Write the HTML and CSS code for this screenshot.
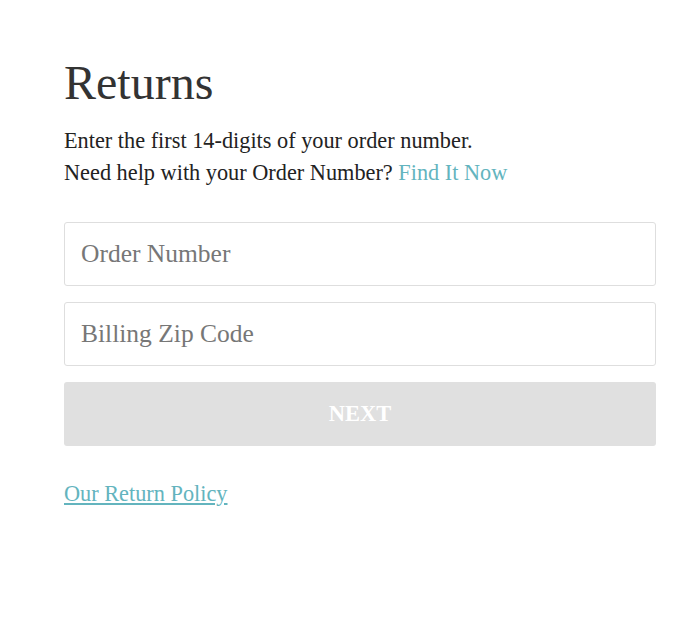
FILE: index.html
```html
<!DOCTYPE html>
<html lang="en">
<head>
    <meta charset="UTF-8">
    <meta name="viewport" content="width=device-width, initial-scale=1.0">
    <title>Returns</title>
    <link rel="stylesheet" href="styles.css">
</head>
<body>

<div class="returns">
    <h1>Returns</h1>
    <p class="intro">
        Enter the first 14-digits of your order number.<br>
        Need help with your Order Number? <a href="#" class="find-link">Find It Now</a>
    </p>

    <form class="returns-form">
        <input type="text" name="orderNumber" placeholder="Order Number">
        <input type="text" name="zipCode" placeholder="Billing Zip Code">
        <button type="submit" disabled>NEXT</button>
    </form>

    <a href="#" class="policy-link">Our Return Policy</a>
</div>

</body>
</html>
```

FILE: styles.css
```css
body {
    font-family: "Liberation Serif", "Times New Roman", serif;
    background-color: #fff;
    color: #222;
    margin: 0;
    padding: 0;
}
.returns {
    width: 592px;
    padding: 55px 64px 0;
}
h1 {
    font-size: 48px;
    font-weight: normal;
    line-height: 56px;
    color: #333;
    margin: 0 0 14px;
}
.intro {
    font-size: 22.3px;
    line-height: 32px;
    margin: 0 0 33px;
}
.find-link {
    color: #63b4be;
    text-decoration: none;
}
.returns-form {
    display: flex;
    flex-direction: column;
    gap: 16px;
}
input[type="text"] {
    box-sizing: border-box;
    width: 100%;
    height: 64px;
    padding: 0 16px;
    border: 1px solid #dedede;
    border-radius: 3px;
    font-family: inherit;
    font-size: 25.5px;
    color: #333;
    outline: none;
}
input::placeholder {
    color: #777;
}
button {
    width: 100%;
    height: 64px;
    background-color: #e0e0e0;
    color: #fff;
    border: none;
    border-radius: 3px;
    font-family: inherit;
    font-weight: bold;
    font-size: 22.5px;
}
.policy-link {
    display: inline-block;
    margin-top: 32px;
    font-size: 22.3px;
    line-height: 32px;
    color: #63b4be;
}
```
